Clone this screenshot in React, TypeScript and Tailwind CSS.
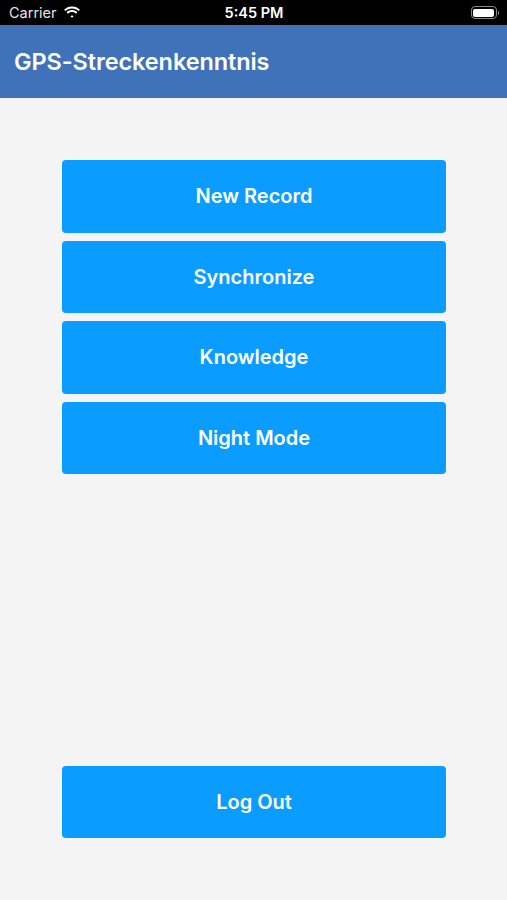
// App.tsx
// Main menu screen of the GPS-Streckenkenntnis app, with iOS status bar.

const menuItems = ['New Record', 'Synchronize', 'Knowledge', 'Night Mode']

function StatusBar() {
  return (
    <div className="h-[25px] bg-black text-white flex items-center justify-between pl-[9px] pr-[8px] text-[14.5px]">
      <div className="flex items-center gap-[6px] w-[120px]">
        <span className="text-[#e5e5e5]">Carrier</span>
        <svg width="18" height="13" viewBox="0 0 17 12" fill="white">
          <path d="M8.5 2.2c2.4 0 4.6.9 6.2 2.5l1.3-1.3C14 1.4 11.4.3 8.5.3S3 1.4 1 3.4l1.3 1.3C3.9 3.1 6.1 2.2 8.5 2.2z" />
          <path d="M8.5 5.6c1.5 0 2.8.6 3.8 1.5l1.3-1.3C12.3 4.5 10.5 3.7 8.5 3.7S4.7 4.5 3.4 5.8l1.3 1.3c1-.9 2.3-1.5 3.8-1.5z" />
          <path d="M8.5 8.9c.6 0 1.1.2 1.5.6L8.5 11 7 9.5c.4-.4.9-.6 1.5-.6z" />
        </svg>
      </div>
      <span className="font-semibold">5:45 PM</span>
      <div className="w-[120px] flex justify-end">
        <div className="flex items-center">
          <div className="w-[26px] h-[13px] rounded-[4px] border border-[#8a8a8a] p-[1.5px]">
            <div className="w-full h-full bg-white rounded-[2px]" />
          </div>
          <div className="w-[1.5px] h-[4px] bg-[#8a8a8a] rounded-r-sm ml-[1px]" />
        </div>
      </div>
    </div>
  )
}

function MenuButton({ label }: { label: string }) {
  return (
    <button className="w-full h-[72.5px] rounded-[4px] bg-[#0a9cff] text-white text-[20px] font-semibold">
      {label}
    </button>
  )
}

export default function App() {
  return (
    <div className="w-[507px] h-[900px] flex flex-col bg-[#f4f4f4]" style={{ fontFamily: 'Inter, "Noto Sans", sans-serif' }}>
      <StatusBar />
      <header className="h-[73px] bg-[#3f72b9] flex items-center px-[14px]">
        <h1 className="text-white text-[23.5px] font-semibold tracking-[-0.1px]">GPS-Streckenkenntnis</h1>
      </header>
      <main className="flex-1 flex flex-col pl-[62px] pt-[62px] pb-[62px]">
        <div className="w-[384px] flex flex-col gap-[8px]">
          {menuItems.map((item) => (
            <MenuButton key={item} label={item} />
          ))}
        </div>
        <div className="w-[384px] mt-auto">
          <MenuButton label="Log Out" />
        </div>
      </main>
    </div>
  )
}
